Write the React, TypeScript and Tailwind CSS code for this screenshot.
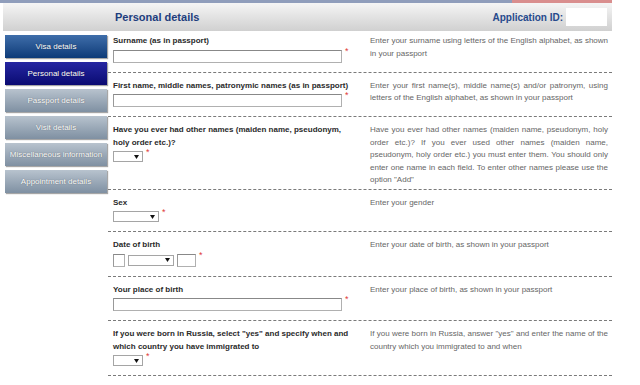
import React from "react";

const Star = () => (
    <span className="ml-[3px] -mt-[3px] text-[9px] leading-none text-[#e03a3a]">*</span>
);

const Select = ({ w }: { w: string }) => (
    <div className={`${w} h-[11px] flex items-center justify-end pr-[3px] bg-white border border-[#a5a5a5]`}>
        <svg width="5" height="4" viewBox="0 0 5 4">
            <path d="M0 0 H5 L2.5 4 Z" fill="#111" />
        </svg>
    </div>
);

const TextBox = ({ w }: { w: string }) => (
    <div className={`${w} h-[13px] bg-white border border-[#b0b0b0] border-t-[#888] border-l-[#999]`}></div>
);

type RowProps = {
    label: string;
    desc: string;
    first?: boolean;
    children: React.ReactNode;
};

const Row: React.FC<RowProps> = ({ label, desc, first, children }) => (
    <div className={`flex border-b border-dashed border-[#7a7a7a] pl-[5px] pr-[4px] pb-[2px] ${first ? "pt-[4px]" : "pt-[7px]"}`}>
        <div className="w-[242px] pb-[7px]">
            <p className="font-bold text-[8px] leading-[12.5px] text-[#2a2a2a]">{label}</p>
            <div className="mt-[2px] flex items-start">
                {children}
                <Star />
            </div>
        </div>
        <p className="ml-[15px] flex-1 text-[8px] leading-[12.5px] text-[#666] text-justify">{desc}</p>
    </div>
);

const navItems = [
    { name: "Visa details", cls: "from-[#3f6eaa] to-[#0d3b78]" },
    { name: "Personal details", cls: "from-[#2626a2] to-[#0a0a72]" },
    { name: "Passport details", cls: "from-[#b8c3ce] to-[#7f90a2]" },
    { name: "Visit details", cls: "from-[#b8c3ce] to-[#7f90a2]" },
    { name: "Miscellaneous information", cls: "from-[#b8c3ce] to-[#7f90a2]" },
    { name: "Appointment details", cls: "from-[#b8c3ce] to-[#7f90a2]" },
];

export default function App() {
    return (
        <div className="w-[640px] h-[385px] bg-white overflow-hidden font-['Liberation_Sans',Arial,sans-serif]">
            <div className="w-[612px]">
                {/* top strip */}
                <div className="flex h-[3px]">
                    <div className="flex-1 bg-[#8f9dbb]"></div>
                    <div className="w-[100px] bg-[#d98e8e]"></div>
                </div>

                {/* header */}
                <div className="ml-[3px] h-[28px] flex items-center bg-linear-to-b from-[#f5f5f5] to-[#d0d0d0]">
                    <p className="pl-[112px] font-bold text-[11px] text-[#1d3d7d]">Personal details</p>
                    <p className="ml-auto font-bold text-[10px] text-[#274a8c]">Application ID:</p>
                    <div className="ml-[3px] mr-[5px] w-[41px] h-[18px] bg-white"></div>
                </div>

                <div className="flex">
                    {/* sidebar */}
                    <div className="w-[108px] pt-[4px] pl-[5px] pr-[1px] flex flex-col gap-[4px]">
                        {navItems.map((item) => (
                            <div
                                key={item.name}
                                className={`h-[23px] flex items-center justify-center bg-linear-to-b ${item.cls} text-white text-[8px] shadow-[1px_1px_1px_rgba(0,0,0,0.35)] [text-shadow:0_0_1px_rgba(0,0,0,0.5)]`}
                            >
                                {item.name}
                            </div>
                        ))}
                    </div>

                    {/* form */}
                    <div className="flex-1">
                        <Row
                            first
                            label="Surname (as in passport)"
                            desc="Enter your surname using letters of the English alphabet, as shown in your passport"
                        >
                            <TextBox w="w-[229px]" />
                        </Row>
                        <Row
                            label="First name, middle names, patronymic names (as in passport)"
                            desc="Enter your first name(s), middle name(s) and/or patronym, using letters of the English alphabet, as shown in your passport"
                        >
                            <TextBox w="w-[229px]" />
                        </Row>
                        <Row
                            label="Have you ever had other names (maiden name, pseudonym, holy order etc.)?"
                            desc={'Have you ever had other names (maiden name, pseudonym, holy order etc.)? If you ever used other names (maiden name, pseudonym, holy order etc.) you must enter them. You should only enter one name in each field. To enter other names please use the option "Add"'}
                        >
                            <Select w="w-[30px]" />
                        </Row>
                        <Row label="Sex" desc="Enter your gender">
                            <Select w="w-[46px]" />
                        </Row>
                        <Row label="Date of birth" desc="Enter your date of birth, as shown in your passport">
                            <div className="flex items-center gap-[3px]">
                                <TextBox w="w-[12px]" />
                                <Select w="w-[46px]" />
                                <TextBox w="w-[19px]" />
                            </div>
                        </Row>
                        <Row label="Your place of birth" desc="Enter your place of birth, as shown in your passport">
                            <TextBox w="w-[229px]" />
                        </Row>
                        <Row
                            label={'If you were born in Russia, select "yes" and specify when and which country you have immigrated to'}
                            desc={'If you were born in Russia, answer "yes" and enter the name of the country which you immigrated to and when'}
                        >
                            <Select w="w-[30px]" />
                        </Row>
                    </div>
                </div>
            </div>
        </div>
    );
}
